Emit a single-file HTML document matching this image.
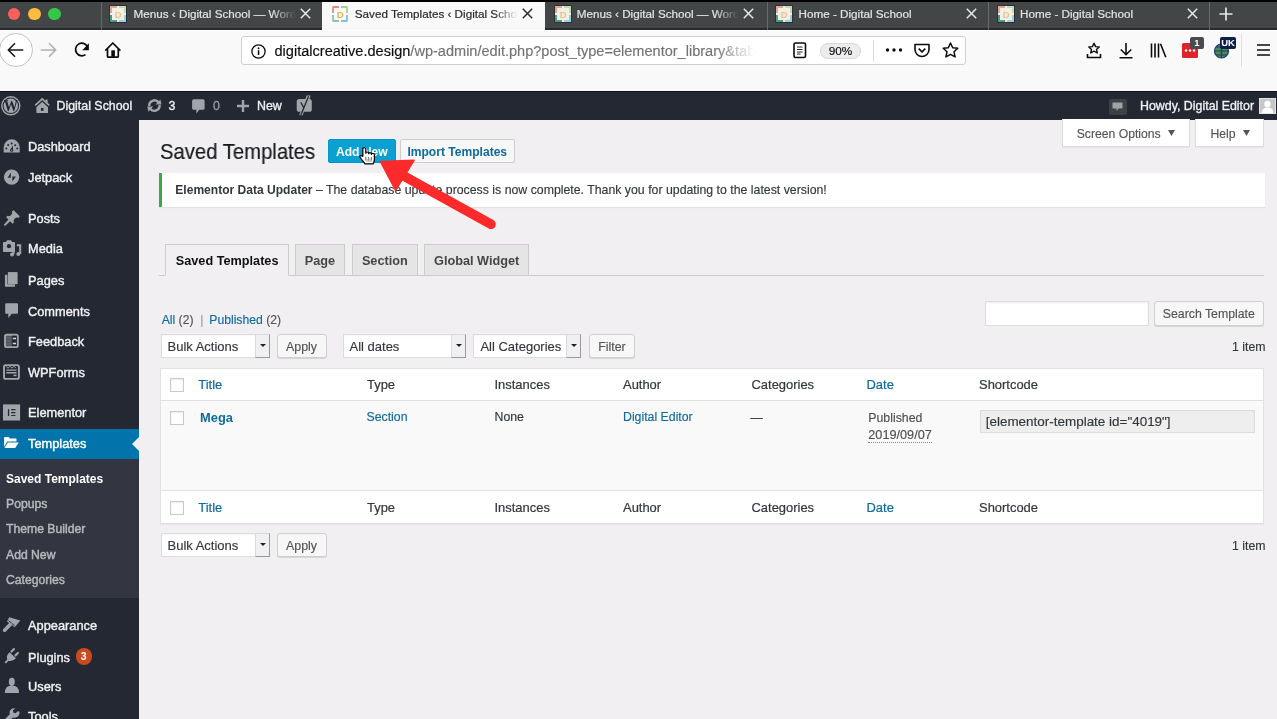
<!DOCTYPE html><html><head><meta charset="utf-8"><title>Saved Templates</title><style>
*{box-sizing:border-box;margin:0;padding:0}
html,body{width:1277px;height:719px;overflow:hidden;background:#f1eff2;font-family:"Liberation Sans",sans-serif}
body{position:relative;-webkit-text-stroke-width:0.15px}
b,[style*="font-weight:700"]{-webkit-text-stroke-width:0}
.a{position:absolute;white-space:nowrap}
svg{position:absolute;overflow:visible}
.tsep{position:absolute;top:2px;width:1.3px;height:28px;background:#68696b}
.tab{position:absolute;top:2px;height:28px}
.tab .t{position:absolute;top:4px;font-size:11.7px;line-height:15px;color:#e2e2e2;-webkit-text-stroke:0.2px #e2e2e2;overflow:hidden;white-space:nowrap}
.tab.act{background:#f9f9fa}
.tab.act .t{color:#2b2b2e;-webkit-text-stroke:0.2px #2b2b2e}
.fav{top:3.8px;width:16px;height:16px}
.cls{top:6.3px;width:11px;height:11px}
.mi{position:absolute;left:28px;font-size:12.8px;line-height:16px;color:#eef0f2;-webkit-text-stroke:0.4px #eef0f2}
.sm{position:absolute;left:6px;font-size:12.2px;line-height:16px;color:#b4b9be;-webkit-text-stroke:0.45px #b4b9be}
.ic{left:3.5px;width:16px;height:16px}
.btn{position:absolute;background:#f7f7f7;border:1px solid #cfcfcf;border-radius:3px;box-shadow:0 1px 0 #d6d6d6;font-size:12.3px;color:#555;text-align:center}
.sel{position:absolute;background:#fff;border:1px solid #dcdcdc;box-shadow:inset 0 1px 2px rgba(0,0,0,.04);font-size:13px;color:#32373c}
.sel .arr{position:absolute;right:-1px;top:-1px;bottom:-1px;width:15px;background:#f0eff1;border:1px solid #d9d9d9;border-right-color:#9a9a9a;border-bottom-color:#9a9a9a;border-right-width:1.3px;border-bottom-width:1.3px}
.sel .arr:after{content:"";position:absolute;left:4px;top:9.3px;border-left:3px solid transparent;border-right:3px solid transparent;border-top:3px solid #222}
.th{position:absolute;font-size:12.95px;line-height:16px;color:#32373c;-webkit-text-stroke:0.2px currentColor}
.lnk{color:#0f6a9e}
.cb{position:absolute;width:14px;height:14px;border:1px solid #c9c9c9;background:#fff;box-shadow:inset 0 1px 2px rgba(0,0,0,.08)}
</style></head><body><div style="position:absolute;left:0;top:0;width:1277px;height:719px;will-change:transform">
<div class="a" style="left:0;top:0;width:1277px;height:2px;background:#000"></div>
<div class="a" style="left:0;top:2px;width:1277px;height:26px;background:#434647"></div>
<div class="a" style="left:0;top:28px;width:1277px;height:2px;background:#2a2a2b"></div>
<div class="a" style="left:7.8px;top:7.7px;width:12.6px;height:12.6px;border-radius:50%;background:#fc605c"></div>
<div class="a" style="left:27.999999999999996px;top:7.7px;width:12.6px;height:12.6px;border-radius:50%;background:#fdbc40"></div>
<div class="a" style="left:48.0px;top:7.7px;width:12.6px;height:12.6px;border-radius:50%;background:#34c84a"></div>
<div class="tab" style="left:101px;width:221px">
<svg class="fav" style="left:9.3px" viewBox="0 0 16 16"><rect x="-1" y="-1" width="18" height="18" fill="#2e2f31"/><rect x="0" y="0" width="16" height="16" fill="#f1efe9"/><path d="M1 7V1H7" fill="none" stroke="#e3a894" stroke-width="2"/><path d="M9 1H15V7" fill="none" stroke="#c6dcae" stroke-width="2"/><path d="M1 9V15H7" fill="none" stroke="#4f9a84" stroke-width="2"/><path d="M9 15H15V9" fill="none" stroke="#9ccfdf" stroke-width="2"/><text x="8.3" y="11.7" font-family="Liberation Sans" font-size="9.5" font-weight="700" fill="#f2c27e" text-anchor="middle">D</text></svg>
<div class="t" style="left:32.5px;width:162.5px">Menus ‹ Digital School — WordPress</div>
<div style="position:absolute;top:2px;height:20px;left:171.0px;width:24px;background:linear-gradient(90deg,rgba(67,70,71,0),rgba(67,70,71,1))"></div>
<svg class="cls" style="left:199px" viewBox="0 0 11 11"><path d="M0.8 0.8L10.2 10.2M10.2 0.8L0.8 10.2" stroke="#e8e8e8" stroke-width="1.5"/></svg>
</div>
<div class="tab act" style="left:322px;width:223px">
<svg class="fav" style="left:10px" viewBox="0 0 16 16"><path d="M1 7V1.5Q1 1 1.5 1H7" fill="none" stroke="#df8f84" stroke-width="1.8"/><path d="M9 1H14.5Q15 1 15 1.5V7" fill="none" stroke="#a9d08c" stroke-width="1.8"/><path d="M1 9V14.5Q1 15 1.5 15H7" fill="none" stroke="#8cc4b4" stroke-width="1.8"/><path d="M9 15H14.5Q15 15 15 14.5V9" fill="none" stroke="#7cc0dc" stroke-width="1.8"/><text x="8.2" y="11.7" font-family="Liberation Sans" font-size="9.5" font-weight="700" fill="#f0ad48" text-anchor="middle">D</text></svg>
<div class="t" style="left:32.8px;width:163.2px">Saved Templates ‹ Digital School — WordPress</div>
<div style="position:absolute;top:2px;height:20px;left:172.0px;width:24px;background:linear-gradient(90deg,rgba(249,249,250,0),rgba(249,249,250,1))"></div>
<svg class="cls" style="left:200px" viewBox="0 0 11 11"><path d="M0.8 0.8L10.2 10.2M10.2 0.8L0.8 10.2" stroke="#2b2b2e" stroke-width="1.5"/></svg>
</div>
<div class="tab" style="left:545px;width:222px">
<svg class="fav" style="left:9.5px" viewBox="0 0 16 16"><rect x="-1" y="-1" width="18" height="18" fill="#2e2f31"/><rect x="0" y="0" width="16" height="16" fill="#f1efe9"/><path d="M1 7V1H7" fill="none" stroke="#e3a894" stroke-width="2"/><path d="M9 1H15V7" fill="none" stroke="#c6dcae" stroke-width="2"/><path d="M1 9V15H7" fill="none" stroke="#4f9a84" stroke-width="2"/><path d="M9 15H15V9" fill="none" stroke="#9ccfdf" stroke-width="2"/><text x="8.3" y="11.7" font-family="Liberation Sans" font-size="9.5" font-weight="700" fill="#f2c27e" text-anchor="middle">D</text></svg>
<div class="t" style="left:31.7px;width:162.3px">Menus ‹ Digital School — WordPress</div>
<div style="position:absolute;top:2px;height:20px;left:170.0px;width:24px;background:linear-gradient(90deg,rgba(67,70,71,0),rgba(67,70,71,1))"></div>
<svg class="cls" style="left:198px" viewBox="0 0 11 11"><path d="M0.8 0.8L10.2 10.2M10.2 0.8L0.8 10.2" stroke="#e8e8e8" stroke-width="1.5"/></svg>
</div>
<div class="tab" style="left:767px;width:221px">
<svg class="fav" style="left:9.2px" viewBox="0 0 16 16"><rect x="-1" y="-1" width="18" height="18" fill="#2e2f31"/><rect x="0" y="0" width="16" height="16" fill="#f1efe9"/><path d="M1 7V1H7" fill="none" stroke="#e3a894" stroke-width="2"/><path d="M9 1H15V7" fill="none" stroke="#c6dcae" stroke-width="2"/><path d="M1 9V15H7" fill="none" stroke="#4f9a84" stroke-width="2"/><path d="M9 15H15V9" fill="none" stroke="#9ccfdf" stroke-width="2"/><text x="8.3" y="11.7" font-family="Liberation Sans" font-size="9.5" font-weight="700" fill="#f2c27e" text-anchor="middle">D</text></svg>
<div class="t" style="left:31.5px;width:163.5px">Home - Digital School</div>
<svg class="cls" style="left:199px" viewBox="0 0 11 11"><path d="M0.8 0.8L10.2 10.2M10.2 0.8L0.8 10.2" stroke="#e8e8e8" stroke-width="1.5"/></svg>
</div>
<div class="tab" style="left:988px;width:221px">
<svg class="fav" style="left:9.5px" viewBox="0 0 16 16"><rect x="-1" y="-1" width="18" height="18" fill="#2e2f31"/><rect x="0" y="0" width="16" height="16" fill="#f1efe9"/><path d="M1 7V1H7" fill="none" stroke="#e3a894" stroke-width="2"/><path d="M9 1H15V7" fill="none" stroke="#c6dcae" stroke-width="2"/><path d="M1 9V15H7" fill="none" stroke="#4f9a84" stroke-width="2"/><path d="M9 15H15V9" fill="none" stroke="#9ccfdf" stroke-width="2"/><text x="8.3" y="11.7" font-family="Liberation Sans" font-size="9.5" font-weight="700" fill="#f2c27e" text-anchor="middle">D</text></svg>
<div class="t" style="left:32px;width:163px">Home - Digital School</div>
<svg class="cls" style="left:199px" viewBox="0 0 11 11"><path d="M0.8 0.8L10.2 10.2M10.2 0.8L0.8 10.2" stroke="#e8e8e8" stroke-width="1.5"/></svg>
</div>
<div class="tsep" style="left:101px"></div>
<div class="tsep" style="left:767px"></div>
<div class="tsep" style="left:988px"></div>
<div class="tsep" style="left:1209px"></div>
<svg style="left:1219px;top:7px;width:14px;height:14px" viewBox="0 0 14 14"><path d="M7 0.5V13.5M0.5 7H13.5" stroke="#e8e8e8" stroke-width="1.7"/></svg>
<div class="a" style="left:0;top:30px;width:1277px;height:61.5px;background:#f9f9fa;border-top:1.5px solid #fff"></div>
<div class="a" style="left:-1.2px;top:33.1px;width:33.8px;height:33.8px;border-radius:50%;border:1.2px solid #c4c4c6;background:#fff"></div>
<svg style="left:7px;top:42px;width:17px;height:16px" viewBox="0 0 17 16"><path d="M16.3 8H1.5M8 1.3L1.4 8L8 14.7" fill="none" stroke="#1a1a1b" stroke-width="1.6"/></svg>
<svg style="left:39.8px;top:42px;width:17px;height:16px" viewBox="0 0 17 16"><path d="M0.7 8H15.5M9 1.3L15.6 8L9 14.7" fill="none" stroke="#b1b1b3" stroke-width="1.6"/></svg>
<svg style="left:72px;top:42px;width:18px;height:16px" viewBox="72 42 18 16"><path d="M87.3 46.3A6.3 6.3 0 1 0 85.5 54.6" fill="none" stroke="#0c0c0d" stroke-width="1.7"/><path d="M88.9 43.3V50.2H82.3Z" fill="#0c0c0d"/></svg>
<svg style="left:104px;top:41px;width:18px;height:18px" viewBox="104 41 18 18"><path d="M105.3 50.6L112.8 43L120.4 50.6" fill="none" stroke="#0c0c0d" stroke-width="1.7" stroke-linejoin="round"/><path d="M107.5 49V56.2Q107.5 57.2 108.5 57.2H117.3Q118.3 57.2 118.3 56.2V49" fill="none" stroke="#0c0c0d" stroke-width="1.7"/><rect x="111.3" y="50.3" width="3.6" height="6.5" fill="#0c0c0d"/></svg>
<div class="a" style="left:241px;top:35.5px;width:724.5px;height:29.5px;border:1px solid #cfcfd2;border-radius:3px;background:#fff"></div>
<svg style="left:250.5px;top:43.5px;width:15px;height:15px" viewBox="0 0 15 15"><circle cx="7.5" cy="7.5" r="6.6" fill="none" stroke="#0c0c0d" stroke-width="1.3"/><rect x="6.8" y="6.2" width="1.5" height="4.8" fill="#0c0c0d"/><circle cx="7.55" cy="4.3" r="0.95" fill="#0c0c0d"/></svg>
<div class="a" style="left:274.5px;top:43.3px;font-size:14.55px;line-height:17px;color:#0c0c0d;width:480px;overflow:hidden">digitalcreative.design<span style="color:#737373">/wp-admin/edit.php?post_type=elementor_library&amp;tabs_group=library&amp;elementor_library_type=</span></div>
<div class="a" style="left:715px;top:40px;width:40px;height:20px;background:linear-gradient(90deg,rgba(255,255,255,0),#fff)"></div>
<svg style="left:793px;top:42px;width:14px;height:17px" viewBox="0 0 14 17"><rect x="1" y="1" width="11.5" height="14.5" rx="1.5" fill="none" stroke="#0c0c0d" stroke-width="1.6"/><path d="M4 5H9.5M4 7.5H9.5M4 10H9.5M4 12H7.5" stroke="#0c0c0d" stroke-width="0.9"/></svg>
<div class="a" style="left:820px;top:42.5px;width:41px;height:16px;border-radius:8px;background:#ededf0;border:1px solid #d7d7db;font-size:11.8px;line-height:14px;text-align:center;color:#0c0c0d">90%</div>
<div class="a" style="left:873px;top:40px;width:1px;height:22px;background:#dcdcde"></div>
<svg style="left:885px;top:47px;width:18px;height:6px" viewBox="0 0 18 6"><circle cx="2.5" cy="3" r="1.7" fill="#0c0c0d"/><circle cx="9" cy="3" r="1.7" fill="#0c0c0d"/><circle cx="15.5" cy="3" r="1.7" fill="#0c0c0d"/></svg>
<svg style="left:914px;top:43px;width:16px;height:15px" viewBox="0 0 16 15"><path d="M1 1.5H15V6.5A7 7 0 0 1 1 6.5Z" fill="none" stroke="#0c0c0d" stroke-width="1.6" stroke-linejoin="round"/><path d="M4.7 5.6L8 8.8L11.3 5.6" fill="none" stroke="#0c0c0d" stroke-width="1.6"/></svg>
<svg style="left:942px;top:42px;width:17px;height:16px" viewBox="0 0 17 16"><path d="M8.5 1L10.7 5.8L15.8 6.3L12 9.8L13.1 14.9L8.5 12.3L3.9 14.9L5 9.8L1.2 6.3L6.3 5.8Z" fill="none" stroke="#0c0c0d" stroke-width="1.5" stroke-linejoin="round"/></svg>
<svg style="left:1086px;top:42px;width:16px;height:17px" viewBox="0 0 16 17"><path d="M8 1.2L9.6 4.6L13.2 5L10.5 7.4L11.3 11L8 9.2L4.7 11L5.5 7.4L2.8 5L6.4 4.6Z" fill="none" stroke="#0c0c0d" stroke-width="1.4" stroke-linejoin="round"/><path d="M1.5 12V15.5H14.5V12" fill="none" stroke="#0c0c0d" stroke-width="1.6"/></svg>
<svg style="left:1118px;top:42px;width:16px;height:17px" viewBox="0 0 16 17"><path d="M8 1V12.5M2.8 7.5L8 12.7L13.2 7.5M1.5 15.8H14.5" fill="none" stroke="#0c0c0d" stroke-width="1.6"/></svg>
<svg style="left:1150px;top:43px;width:17px;height:15px" viewBox="0 0 17 15"><path d="M1.5 0.5V14.5M5 0.5V14.5M8.5 0.5V14.5M10.5 0.8L15.8 14.3" fill="none" stroke="#0c0c0d" stroke-width="1.6"/></svg>
<div class="a" style="left:1182px;top:42.5px;width:16px;height:15.5px;background:#e0232a;border-radius:1.5px"></div>
<svg style="left:1183px;top:48px;width:14px;height:5px" viewBox="0 0 14 5"><circle cx="3" cy="2.5" r="1.2" fill="#fff"/><circle cx="7" cy="2.5" r="1.2" fill="#fff"/><circle cx="11" cy="2.5" r="1.2" fill="#fff"/></svg>
<div class="a" style="left:1190px;top:37px;width:14px;height:12px;background:#4a4a4f;border-radius:2px;color:#fff;font-size:9.5px;font-weight:700;line-height:12px;text-align:center">1</div>
<svg style="left:1213px;top:42px;width:17px;height:17px" viewBox="0 0 17 17"><circle cx="8.5" cy="9" r="7" fill="#4a8a5a"/><path d="M1.5 9H15.5M8.5 2V16M3 5H14M3 13H14" stroke="#1e3a6a" stroke-width="1.2"/><circle cx="8.5" cy="9" r="7" fill="none" stroke="#1e3a6a" stroke-width="1.2"/></svg>
<div class="a" style="left:1220px;top:36.5px;width:16px;height:12px;background:#0e1f4a;border-radius:2px;color:#fff;font-size:9.5px;font-weight:700;line-height:12px;text-align:center">UK</div>
<div class="a" style="left:1241px;top:34px;width:1px;height:33px;background:#e0e0e2"></div>
<svg style="left:1257px;top:44px;width:13px;height:12px" viewBox="0 0 13 12"><path d="M0 1H13M0 6H13M0 11H13" stroke="#0c0c0d" stroke-width="1.6"/></svg>
<div class="a" style="left:0;top:91px;width:1277px;height:29px;background:#242832;border-top:1px solid #0e1012"></div>
<svg style="left:0.6px;top:95.9px;width:19.6px;height:19.6px" viewBox="0 0 20 20"><circle cx="10" cy="10" r="9.2" fill="none" stroke="#a0a5aa" stroke-width="1.5"/><circle cx="10" cy="10" r="7.4" fill="#a0a5aa"/><text x="10.1" y="15.6" font-family="Liberation Serif" font-size="17" font-weight="700" fill="#242832" text-anchor="middle" textLength="14.6" lengthAdjust="spacingAndGlyphs">W</text></svg>
<svg style="left:30px;top:94px;width:24px;height:24px" viewBox="30 94 24 24"><path d="M35.2 105.4L42.2 98.9L49.2 105.4" fill="none" stroke="#a0a5aa" stroke-width="1.7"/><rect x="45.6" y="99.6" width="2" height="3.6" fill="#a0a5aa"/><path d="M36.4 107.2L42.2 101.8L48 107.2V113H36.4Z" fill="#a0a5aa"/><rect x="40.9" y="108" width="2.6" height="2.8" fill="#242832"/></svg>
<div class="a" style="left:56.5px;top:98.2px;font-size:12.4px;line-height:16px;color:#eef0f2;-webkit-text-stroke:0.35px #eef0f2">Digital School</div>
<svg style="left:144px;top:96px;width:20px;height:20px" viewBox="144 96 20 20"><path d="M149.2 106.2A5.3 5.3 0 0 1 158.6 102.4" fill="none" stroke="#a0a5aa" stroke-width="2.4"/><path d="M159.6 105A5.3 5.3 0 0 1 150.2 108.8" fill="none" stroke="#a0a5aa" stroke-width="2.4"/><path d="M155.6 104.6H161.5L160.4 99.4Z" fill="#a0a5aa"/><path d="M153.2 106.6H147.3L148.4 111.8Z" fill="#a0a5aa"/></svg>
<div class="a" style="left:168.5px;top:98.2px;font-size:12.4px;line-height:16px;color:#eef0f2;-webkit-text-stroke:0.35px #eef0f2">3</div>
<svg style="left:191px;top:98px;width:15px;height:17px" viewBox="191 98 15 17"><path d="M193.8 99.3H203Q204.6 99.3 204.6 100.9V108.2Q204.6 109.8 203 109.8H199.2L196.4 113.7V109.8H193.8Q192.1 109.8 192.1 108.2V100.9Q192.1 99.3 193.8 99.3Z" fill="#a0a5aa"/></svg>
<div class="a" style="left:213px;top:98.2px;font-size:12.4px;line-height:16px;color:#9a9fa4;-webkit-text-stroke:0.3px #9a9fa4">0</div>
<svg style="left:237px;top:100px;width:12px;height:12px" viewBox="0 0 12 12"><path d="M6 0V12M0 6H12" stroke="#a0a5aa" stroke-width="2.4"/></svg>
<div class="a" style="left:257px;top:98.2px;font-size:12.4px;line-height:16px;color:#eef0f2;-webkit-text-stroke:0.35px #eef0f2">New</div>
<svg style="left:290px;top:92px;width:28px;height:28px" viewBox="290 92 28 28"><rect x="296.7" y="99" width="15.1" height="12.8" rx="2.6" fill="#a0a5aa"/><path d="M306.6 95.6H310.6L309.4 99.5H305.2Z" fill="#a0a5aa"/><path d="M300.3 111.5H304L302.8 115.3H299.3Z" fill="#a0a5aa"/><path d="M308.6 96.2L300.9 115M300.8 102.2L304.2 108.6" fill="none" stroke="#242832" stroke-width="1.3"/></svg>
<div class="a" style="left:1108.5px;top:98.5px;width:18px;height:16px;background:#3d4146;border-radius:2px"></div>
<svg style="left:1112px;top:101.5px;width:11px;height:10px" viewBox="0 0 11 10"><path d="M0.5 0.5H10.5V6.5H6.5L4.5 9V6.5H0.5Z" fill="#9ea3a8"/></svg>
<div class="a" style="left:1140px;top:98.2px;font-size:12.4px;line-height:16px;color:#eef0f2;-webkit-text-stroke:0.35px #eef0f2">Howdy, Digital Editor</div>
<div class="a" style="left:1259px;top:98px;width:17px;height:16px;background:#c7c7c7;border:1px solid #e3e3e3;overflow:hidden"><svg style="left:0;top:0;width:15px;height:14px" viewBox="0 0 15 14"><circle cx="7.5" cy="5" r="3.2" fill="#fff"/><path d="M1.5 14Q2 8.5 7.5 8.5Q13 8.5 13.5 14Z" fill="#fff"/></svg></div>
<div class="a" style="left:0;top:120px;width:139px;height:599px;background:#242832"></div>
<div class="a" style="left:0;top:428.5px;width:139px;height:30px;background:#0273ab"></div>
<div class="a" style="left:0;top:458.5px;width:139px;height:139.5px;background:#333640"></div>
<svg style="left:132px;top:437px;width:7px;height:14px" viewBox="0 0 7 14"><path d="M7 0V14L0 7Z" fill="#f1eff2"/></svg>
<div class="mi" style="top:139px;color:#eef0f2;-webkit-text-stroke-color:#eef0f2">Dashboard</div>
<div class="mi" style="top:169.5px;color:#eef0f2;-webkit-text-stroke-color:#eef0f2">Jetpack</div>
<div class="mi" style="top:211px;color:#eef0f2;-webkit-text-stroke-color:#eef0f2">Posts</div>
<div class="mi" style="top:241px;color:#eef0f2;-webkit-text-stroke-color:#eef0f2">Media</div>
<div class="mi" style="top:272.5px;color:#eef0f2;-webkit-text-stroke-color:#eef0f2">Pages</div>
<div class="mi" style="top:303.5px;color:#eef0f2;-webkit-text-stroke-color:#eef0f2">Comments</div>
<div class="mi" style="top:333.5px;color:#eef0f2;-webkit-text-stroke-color:#eef0f2">Feedback</div>
<div class="mi" style="top:364.5px;color:#eef0f2;-webkit-text-stroke-color:#eef0f2">WPForms</div>
<div class="mi" style="top:405px;color:#eef0f2;-webkit-text-stroke-color:#eef0f2">Elementor</div>
<div class="mi" style="top:436px;color:#fff;-webkit-text-stroke-color:#fff">Templates</div>
<div class="mi" style="top:618px;color:#eef0f2;-webkit-text-stroke-color:#eef0f2">Appearance</div>
<div class="mi" style="top:649.5px;color:#eef0f2;-webkit-text-stroke-color:#eef0f2">Plugins</div>
<div class="mi" style="top:679.2px;color:#eef0f2;-webkit-text-stroke-color:#eef0f2">Users</div>
<div class="mi" style="top:709px;color:#eef0f2;-webkit-text-stroke-color:#eef0f2">Tools</div>
<svg style="left:0;top:0;width:139px;height:719px" viewBox="0 0 139 719">
<path d="M3.7 152.5V147.3A8 8 0 0 1 19.7 147.3V152.5Z" fill="#a0a5aa"/>
<circle cx="11.7" cy="143.4" r="1" fill="#242832"/><circle cx="8.2" cy="145.1" r="1" fill="#242832"/><circle cx="15.3" cy="145.3" r="1" fill="#242832"/><circle cx="6.3" cy="148.4" r="1" fill="#242832"/><circle cx="17.3" cy="148.4" r="1" fill="#242832"/>
<path d="M10.5 149.8L12.8 145.2L13 150.2Z" fill="#242832"/><circle cx="11.7" cy="150.2" r="1.6" fill="#242832"/><circle cx="11.7" cy="150.2" r="0.6" fill="#a0a5aa"/>
<circle cx="11.6" cy="177.1" r="7.7" fill="#a0a5aa"/><path d="M10.8 172.6V177.8H7.8Z" fill="#242832"/><path d="M12.4 181.5V176.5H15.9Z" fill="#242832"/>
<path d="M13.7 210.3L19.9 216.5L18.6 217.8Q16.8 216.8 15.2 218.3L14.4 219.1Q13 220.6 14 222.3L12.6 223.7L10.2 221.3L5 226L3.8 224.8L8.5 219.6L6.1 217.2L7.5 215.8Q9.2 216.8 10.6 215.4L11.4 214.6Q12.9 213 11.9 211.3Z" fill="#a0a5aa"/>
<path d="M3 242.8Q3 242 3.8 242H5.8L7.2 240.2H11L12.2 242H14.2Q15 242 15 242.8V251.3Q15 252 14.2 252H3.8Q3 252 3 251.3Z" fill="#a0a5aa"/><circle cx="9" cy="246.2" r="2.1" fill="#242832"/>
<path d="M16.8 245.3H20.2V254" fill="none" stroke="#a0a5aa" stroke-width="2"/><circle cx="18.3" cy="254" r="2" fill="#a0a5aa"/>
<path d="M13.6 250.5V254.2" stroke="#a0a5aa" stroke-width="2"/><circle cx="12" cy="254.4" r="2" fill="#a0a5aa"/>
<rect x="7.9" y="272.1" width="9.7" height="12" fill="#a0a5aa"/><path d="M6.2 274.8V285.5H15" fill="none" stroke="#a0a5aa" stroke-width="2.5"/>
<path d="M6.2 303.3H17Q18 303.3 18 304.3V312.8Q18 313.8 17 313.8H11.8L8.3 317.9V313.8H6.2Q5.2 313.8 5.2 312.8V304.3Q5.2 303.3 6.2 303.3Z" fill="#a0a5aa"/>
<rect x="5" y="334.7" width="12.8" height="12.4" rx="1.6" fill="#50555a" stroke="#a0a5aa" stroke-width="1.9"/><rect x="12" y="335.7" width="4.8" height="10.4" fill="#242832"/><path d="M12.8 338.5H16M12.8 343.5H16" stroke="#d6d9dc" stroke-width="1.5"/><path d="M6.5 338H10.5M6.5 341H10.5M6.5 344H10.5" stroke="#6e7378" stroke-width="1"/>
<rect x="4" y="365.1" width="14.9" height="13.8" rx="1.6" fill="#242832" stroke="#a0a5aa" stroke-width="1.9"/><path d="M6 366.2L8 368.2L10 366.2L12 368.2L14 366.2L16 368.2" fill="none" stroke="#a0a5aa" stroke-width="1"/><path d="M6.3 370.1H16.5M6.3 372.8H16.5" stroke="#a0a5aa" stroke-width="1.4"/><path d="M13.5 375.4H16.5" stroke="#a0a5aa" stroke-width="1.6"/>
<rect x="3" y="404.4" width="17.1" height="16.1" fill="#a0a5aa"/><rect x="7.9" y="409.2" width="1.3" height="6.8" fill="#242832"/><path d="M11.2 409.7H15.4M11.2 412.6H15.4M11.2 415.5H15.4" stroke="#242832" stroke-width="1.2"/>
<path d="M4.1 437.8Q4.1 437 4.9 437H8.8L10 438.6H15.8Q16.5 438.6 16.5 439.3V441.6H7.2L4.1 447Z" fill="#fff"/><path d="M7.8 442.6H18.8L15.2 448H4.5Z" fill="#fff"/>
<path d="M9.2 617.3L20.3 620.5L14.7 627.3L7 621.4Z" fill="#a0a5aa"/><path d="M8.6 620.6L14.6 625.8" stroke="#242832" stroke-width="1"/><path d="M10.2 624.6L4.6 630.2" stroke="#a0a5aa" stroke-width="3.6" stroke-linecap="round"/>
<path d="M4.5 662.2L7.2 659.4Q5.8 655.5 9.6 652.2L16 658.3Q12.5 662 8.7 660.8L5.9 663.5Z" fill="#a0a5aa"/><path d="M11.5 651.5L13.9 649.1M15.5 655.4L17.9 653" stroke="#a0a5aa" stroke-width="2.2" stroke-linecap="round"/>
<ellipse cx="11.8" cy="681.8" rx="3" ry="4.1" fill="#a0a5aa"/><path d="M4.9 692.9Q4.9 685.6 11.9 685.6Q19 685.6 19 692.9Z" fill="#a0a5aa"/>
<path d="M19.5 712Q19.8 716 16.5 717.3Q14.5 718 12.8 717.4L8.5 721.5Q7 723 5.5 721.5Q4 720 5.5 718.5L9.8 714.3Q9.2 712.4 10 710.6Q11.5 707.7 15.3 708.2L12.9 710.6L13.5 712.8L15.6 713.3L18 711Z" fill="#a0a5aa"/>
</svg>
<div class="a" style="left:75.5px;top:648px;width:16.5px;height:16.5px;border-radius:50%;background:#ca4a1f;color:#fff;font-size:10.5px;font-weight:700;line-height:16.5px;text-align:center">3</div>
<div class="a" style="left:6px;top:470.5px;font-size:12px;line-height:16px;font-weight:700;color:#fff">Saved Templates</div>
<div class="sm" style="top:495.5px">Popups</div>
<div class="sm" style="top:520.5px">Theme Builder</div>
<div class="sm" style="top:546.5px">Add New</div>
<div class="sm" style="top:571.7px">Categories</div>
<div class="a" style="left:159.5px;top:140.1px;font-size:21.5px;line-height:24px;color:#15181b;transform:scaleX(0.943);transform-origin:0 0">Saved Templates</div>
<div class="a" style="left:328px;top:138.5px;width:67.5px;height:24.5px;background:#0ba0d2;border:1px solid #0096c8;border-radius:2px;color:#fff;font-size:12.1px;font-weight:700;line-height:24.5px;padding-left:7px">Add New</div>
<div class="a" style="left:399.5px;top:138.5px;width:115.5px;height:24.5px;background:#f7f7f7;border:1px solid #cdcdcd;border-radius:2px;color:#0f6a9e;font-size:12.07px;font-weight:700;line-height:24.5px;text-align:center">Import Templates</div>
<div class="a" style="left:1062px;top:119px;width:127.5px;height:27.5px;background:#fff;border:1px solid #dcdcdc;border-top:none;box-shadow:0 1px 1px rgba(0,0,0,.04)"></div>
<div class="a" style="left:1076.7px;top:125.5px;font-size:12.2px;line-height:16px;color:#555">Screen Options</div>
<svg style="left:1167.5px;top:129.5px;width:7px;height:6px" viewBox="0 0 7 6"><path d="M0 0H7L3.5 6Z" fill="#555"/></svg>
<div class="a" style="left:1195px;top:119px;width:69px;height:27.5px;background:#fff;border:1px solid #dcdcdc;border-top:none;box-shadow:0 1px 1px rgba(0,0,0,.04)"></div>
<div class="a" style="left:1210.5px;top:125.5px;font-size:12.2px;line-height:16px;color:#555">Help</div>
<svg style="left:1242.5px;top:129.5px;width:7px;height:6px" viewBox="0 0 7 6"><path d="M0 0H7L3.5 6Z" fill="#555"/></svg>
<div class="a" style="left:159px;top:173px;width:1106px;height:34px;background:#fff;border-left:3px solid #3da648;box-shadow:0 1px 1px rgba(0,0,0,.06)"></div>
<div class="a" style="left:175.3px;top:181.5px;font-size:12.05px;line-height:16px;color:#32373c"><b>Elementor Data Updater</b><span style="font-size:12.32px"> – The database update process is now complete. Thank you for updating to the latest version!</span></div>
<div class="a" style="left:159px;top:275px;width:1105px;height:1px;background:#cccccc"></div>
<div class="a" style="left:165.3px;top:244px;width:123.69999999999999px;height:32px;background:#f1eff2;border:1px solid #ccc;border-bottom:1px solid #f1eff2;border-bottom-width:1px;color:#111;font-size:12.7px;font-weight:700;line-height:33px;text-align:center">Saved Templates</div>
<div class="a" style="left:295px;top:244px;width:50px;height:31px;background:#e5e5e5;border:1px solid #ccc;border-bottom-width:0px;color:#464646;font-size:12.7px;font-weight:700;line-height:33px;text-align:center">Page</div>
<div class="a" style="left:351.6px;top:244px;width:66.39999999999998px;height:31px;background:#e5e5e5;border:1px solid #ccc;border-bottom-width:0px;color:#464646;font-size:12.7px;font-weight:700;line-height:33px;text-align:center">Section</div>
<div class="a" style="left:424px;top:244px;width:105.39999999999998px;height:31px;background:#e5e5e5;border:1px solid #ccc;border-bottom-width:0px;color:#464646;font-size:12.7px;font-weight:700;line-height:33px;text-align:center">Global Widget</div>
<div class="a" style="left:161.7px;top:312px;font-size:12.2px;line-height:16px;color:#555"><span class="lnk">All</span> (2) &nbsp;<span style="color:#9a9a9a">|</span>&nbsp;<span style="margin-left:2.4px" class="lnk">Published</span> (2)</div>
<div class="a" style="left:985px;top:301px;width:163.5px;height:24.5px;background:#fff;border:1px solid #ddd;box-shadow:inset 0 1px 2px rgba(0,0,0,.07)"></div>
<div class="btn" style="left:1153.5px;top:301px;width:110.7px;height:25px;line-height:24px">Search Template</div>
<div class="a" style="left:1232px;top:339px;font-size:12.3px;line-height:16px;color:#32373c">1 item</div>
<div class="sel" style="left:160.5px;top:334px;width:109.3px;height:24px"><span style="position:absolute;left:6px;top:4px;line-height:16px">Bulk Actions</span><div class="arr"></div></div>
<div class="btn" style="left:276.5px;top:334px;width:50px;height:24px;line-height:24px;font-size:12.4px">Apply</div>
<div class="sel" style="left:342.5px;top:334px;width:123.5px;height:24px"><span style="position:absolute;left:6px;top:4px;line-height:16px">All dates</span><div class="arr"></div></div>
<div class="sel" style="left:473.4px;top:334px;width:108px;height:24px"><span style="position:absolute;left:6px;top:4px;line-height:16px">All Categories</span><div class="arr"></div></div>
<div class="btn" style="left:588.6px;top:334px;width:46.7px;height:24px;line-height:24px;font-size:12.4px">Filter</div>
<div class="a" style="left:159.5px;top:367.5px;width:1104.5px;height:156px;background:#fff;border:1px solid #e1e1e1;box-shadow:0 1px 1px rgba(0,0,0,.04)"></div>
<div class="a" style="left:160.5px;top:399.5px;width:1102.5px;height:91.5px;background:#f9f9f9;border-top:1px solid #e1e1e1;border-bottom:1px solid #e1e1e1"></div>
<div class="cb" style="left:170px;top:378.0px"></div>
<div class="th lnk" style="left:198.3px;top:376.5px">Title</div>
<div class="th" style="left:367px;top:376.5px">Type</div>
<div class="th" style="left:494.5px;top:376.5px">Instances</div>
<div class="th" style="left:623px;top:376.5px">Author</div>
<div class="th" style="left:751.5px;top:376.5px">Categories</div>
<div class="th lnk" style="left:866.5px;top:376.5px">Date</div>
<div class="th" style="left:979px;top:376.5px">Shortcode</div>
<div class="cb" style="left:170px;top:501.0px"></div>
<div class="th lnk" style="left:198.3px;top:499.5px">Title</div>
<div class="th" style="left:367px;top:499.5px">Type</div>
<div class="th" style="left:494.5px;top:499.5px">Instances</div>
<div class="th" style="left:623px;top:499.5px">Author</div>
<div class="th" style="left:751.5px;top:499.5px">Categories</div>
<div class="th lnk" style="left:866.5px;top:499.5px">Date</div>
<div class="th" style="left:979px;top:499.5px">Shortcode</div>
<div class="cb" style="left:170px;top:410.5px"></div>
<div class="a" style="left:200px;top:409.5px;font-size:12.9px;line-height:16px;font-weight:700;color:#0f6a9e">Mega</div>
<div class="a" style="left:366.5px;top:409px;font-size:12.3px;line-height:16px;color:#0f6a9e">Section</div>
<div class="a" style="left:494.5px;top:409px;font-size:12.3px;line-height:16px;color:#32373c">None</div>
<div class="a" style="left:623px;top:409px;font-size:12.3px;line-height:16px;color:#0f6a9e">Digital Editor</div>
<div class="a" style="left:750.5px;top:410px;font-size:12.3px;line-height:16px;color:#32373c">—</div>
<div class="a" style="left:868.3px;top:409.8px;font-size:12.3px;line-height:16px;color:#4f4f4f">Published</div>
<div class="a" style="left:868.3px;top:428px;font-size:12.7px;line-height:15px;color:#4f4f4f;border-bottom:1px dotted #888;height:15px">2019/09/07</div>
<div class="a" style="left:979.7px;top:409.7px;width:275.5px;height:23px;background:#eeeeee;border:1px solid #dcdcdc;font-size:13.46px;line-height:21px;padding-left:5px;color:#32373c">[elementor-template id="4019"]</div>
<div class="sel" style="left:160.5px;top:532.8px;width:109.3px;height:24px"><span style="position:absolute;left:6px;top:4px;line-height:16px">Bulk Actions</span><div class="arr"></div></div>
<div class="btn" style="left:276.5px;top:532.8px;width:50px;height:24px;line-height:24px;font-size:12.4px">Apply</div>
<div class="a" style="left:1232px;top:537.5px;font-size:12.3px;line-height:16px;color:#32373c">1 item</div>
<svg style="left:0;top:0;width:1277px;height:719px" viewBox="0 0 1277 719"><path d="M402 175L491 224.3" stroke="#fc2a2a" stroke-width="9.6" stroke-linecap="round"/><path d="M380.5 161.6L414.2 160.2L395.6 190.3Z" fill="#fc2a2a" stroke="#fc2a2a" stroke-width="1.5" stroke-linejoin="round"/></svg>
<svg style="left:359px;top:147px;width:18px;height:18px" viewBox="0 0 16 18" preserveAspectRatio="none"><path d="M3.4 9V1.9Q3.4 0.6 4.7 0.6Q6 0.6 6 1.9V6.2Q6 5 7.2 5Q8.5 5 8.5 6.2V6.8Q8.5 5.6 9.8 5.6Q11 5.6 11 6.8V7.4Q11 6.3 12.3 6.3Q13.7 6.3 13.7 7.6V12.6Q13.7 14.3 12.6 16.9H5.4Q4.2 14.8 2.6 12.8L0.9 10.4Q0.3 9.2 1.3 8.7Q2.2 8.3 3.4 9.4Z" fill="#fff" stroke="#000" stroke-width="1.1" stroke-linejoin="round"/><path d="M6 10V13.5M8.5 10V13.5M11 10V13.5" stroke="#555" stroke-width="0.8"/><rect x="6.3" y="11.5" width="5" height="3.6" fill="#aaa" opacity="0.6"/></svg>
</div></body></html>
